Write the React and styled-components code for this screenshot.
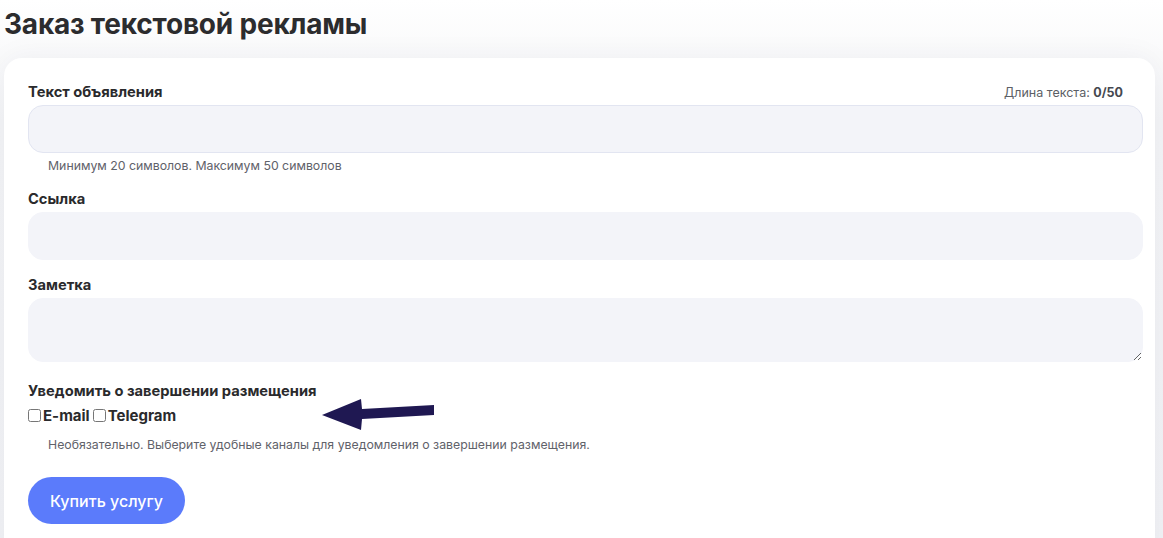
import styled, { createGlobalStyle } from "styled-components";

const Global = createGlobalStyle`
  html, body {
    margin: 0;
    padding: 0;
  }
  body {
    background: linear-gradient(180deg, #ffffff 0%, #f3f4f6 120px, #f1f2f5 100%);
    font-family: Inter, "Noto Sans", sans-serif;
    color: #2b2b2d;
    min-height: 538px;
    overflow: hidden;
  }
`;

const Page = styled.div`
  padding: 0 8px 0 4px;
`;

const Title = styled.h1`
  margin: 0;
  padding: 6px 0 0 0;
  height: 52px;
  font-size: 28px;
  line-height: 36px;
  font-weight: 700;
  letter-spacing: -0.2px;
  color: #2c2c2e;
`;

const Card = styled.div`
  position: relative;
  background: #ffffff;
  border-radius: 18px;
  padding: 24px 12px 12px 24px;
  min-height: 470px;
  box-shadow: 0 0 30px rgba(40, 45, 70, 0.05);
`;

const LabelRow = styled.div`
  display: flex;
  justify-content: space-between;
  align-items: center;
  padding-right: 20px;
  height: 20px;
  margin-bottom: 3px;
  margin-top: ${(p) => p.$top || 0}px;
`;

const Label = styled.label`
  font-size: 14.7px;
  font-weight: 700;
  color: #2a2a2c;
`;

const Counter = styled.span`
  font-size: 12.5px;
  color: #5c5f66;

  b {
    font-weight: 700;
    color: #45484f;
  }
`;

const Input = styled.input`
  display: block;
  box-sizing: border-box;
  width: 100%;
  height: 48px;
  margin: 0;
  border: 1px solid ${(p) => (p.$bordered ? "#e2e5f1" : "#f3f4f9")};
  border-radius: 15px;
  background: #f3f4f9;
  outline: none;
  padding: 0 16px;
  font-family: inherit;
`;

const Area = styled.textarea`
  display: block;
  box-sizing: border-box;
  width: 100%;
  height: 64px;
  margin: 0;
  border: 1px solid #f3f4f9;
  border-radius: 15px;
  background: #f3f4f9;
  outline: none;
  padding: 10px 16px;
  font-family: inherit;
  resize: vertical;
`;

const Hint = styled.div`
  font-size: 12.3px;
  line-height: 18px;
  color: #5f626a;
  padding-left: 20px;
  margin-top: ${(p) => p.$top || 4}px;
`;

const Checks = styled.div`
  position: relative;
  display: flex;
  align-items: center;
  gap: 3px;
  height: 18px;
  margin-top: 5px;
`;

const Check = styled.label`
  display: flex;
  align-items: center;
  font-size: 15px;
  font-weight: 700;
  color: #2a2a2c;

  input {
    margin: 0 2px 0 0;
    width: 13px;
    height: 13px;
  }
`;

const Arrow = styled.svg`
  position: absolute;
  left: 290px;
  top: -11px;
`;

const Button = styled.button`
  margin-top: 23px;
  height: 47px;
  padding: 0 22px;
  border: none;
  border-radius: 24px;
  background: #5b7bfb;
  color: #ffffff;
  font-family: inherit;
  font-size: 16px;
  font-weight: 500;
  cursor: pointer;
`;

export default function App() {
  return (
    <Page>
      <Global />
      <Title>Заказ текстовой рекламы</Title>
      <Card>
        <LabelRow>
          <Label>Текст объявления</Label>
          <Counter>
            Длина текста: <b>0/50</b>
          </Counter>
        </LabelRow>
        <Input $bordered />
        <Hint>Минимум 20 символов. Максимум 50 символов</Hint>

        <LabelRow $top={14}>
          <Label>Ссылка</Label>
        </LabelRow>
        <Input />

        <LabelRow $top={15}>
          <Label>Заметка</Label>
        </LabelRow>
        <Area />

        <LabelRow $top={19}>
          <Label>Уведомить о завершении размещения</Label>
        </LabelRow>
        <Checks>
          <Check>
            <input type="checkbox" />
            E-mail
          </Check>
          <Check>
            <input type="checkbox" />
            Telegram
          </Check>
          <Arrow width="120" height="40" viewBox="0 0 120 40">
            <polygon
              points="4,20 43,4 44,14 116,10 116,20 44,24 43,35"
              fill="#1f1852"
            />
          </Arrow>
        </Checks>
        <Hint $top={12}>
          Необязательно. Выберите удобные каналы для уведомления о завершении
          размещения.
        </Hint>
        <Button>Купить услугу</Button>
      </Card>
    </Page>
  );
}
